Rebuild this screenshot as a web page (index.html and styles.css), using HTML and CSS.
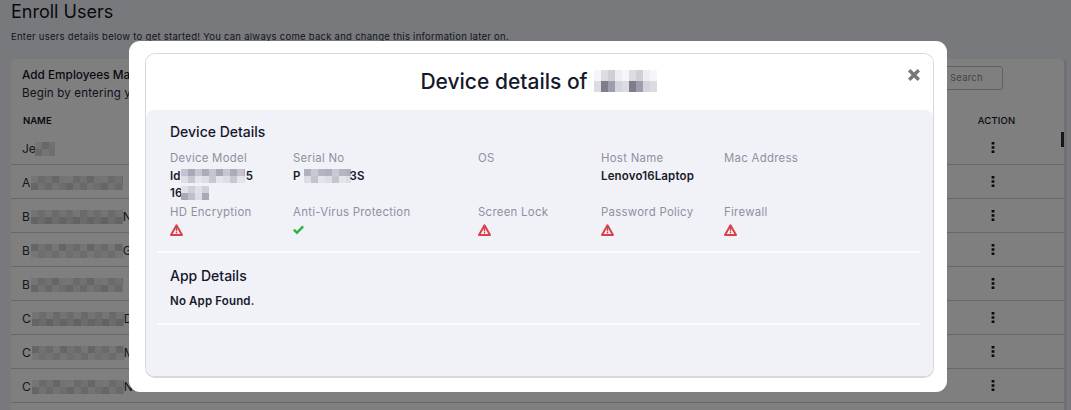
FILE: index.html
```html
<!DOCTYPE html>
<html lang="en">
<head>
<meta charset="utf-8">
<title>Enroll Users</title>
<link rel="stylesheet" href="styles.css">
</head>
<body>
<svg class="defs" width="0" height="0" aria-hidden="true">
  <symbol id="warn" viewBox="0 0 13 12">
    <path d="M6.5 1.3 12 10.9H1z" fill="#fbf3f4" stroke="#d9404c" stroke-width="2" stroke-linejoin="round"/>
    <path d="M5.7 3.9h1.6l-.2 3.6H5.9zM5.8 8.1h1.4v1.4H5.8z" fill="#d9404c"/>
  </symbol>
  <symbol id="dots" viewBox="0 0 4 11">
    <path d="M.6 0h2.8v2.6H.6zM.6 4.2h2.8v2.6H.6zM.6 8.4h2.8V11H.6z" fill="#12131a"/>
  </symbol>
</svg>
<main class="page">
  <h1 class="page-title">Enroll Users</h1>
  <p class="page-sub">Enter users details below to get started! You can always come back and change this information later on.</p>
  <section class="card">
    <div class="card-head">
      <div>
        <h2 class="card-title">Add Employees Manually</h2>
        <p class="card-sub">Begin by entering your employees details</p>
      </div>
      <div class="search">Search</div>
    </div>
    <div class="thead"><span>NAME</span><span class="act">ACTION</span></div>
    <div class="scrollthumb"></div>
    <div class="row"><span class="name">Je<i class="mosaic m-short"></i></span><span class="act"><svg class="dots"><use href="#dots"/></svg></span></div>
    <div class="row"><span class="name">A<i class="mosaic m-a"></i></span><span class="act"><svg class="dots"><use href="#dots"/></svg></span></div>
    <div class="row"><span class="name">B<i class="mosaic m-b"></i>N</span><span class="act"><svg class="dots"><use href="#dots"/></svg></span></div>
    <div class="row"><span class="name">B<i class="mosaic m-c"></i>G</span><span class="act"><svg class="dots"><use href="#dots"/></svg></span></div>
    <div class="row"><span class="name">B<i class="mosaic m-a"></i></span><span class="act"><svg class="dots"><use href="#dots"/></svg></span></div>
    <div class="row"><span class="name">C<i class="mosaic m-b"></i>D</span><span class="act"><svg class="dots"><use href="#dots"/></svg></span></div>
    <div class="row"><span class="name">C<i class="mosaic m-c"></i>M</span><span class="act"><svg class="dots"><use href="#dots"/></svg></span></div>
    <div class="row"><span class="name">C<i class="mosaic m-a"></i>NE</span><span class="extra">gg</span><span class="extra2">g,</span><span class="act"><svg class="dots"><use href="#dots"/></svg></span></div>
  </section>
</main>

<div class="overlay">
  <div class="modal">
    <div class="panel">
      <header class="modal-head">
        <h2 class="modal-title">Device details of <i class="mosaic m-title"></i></h2>
        <svg class="close" viewBox="0 0 12 12" aria-label="Close"><path d="M2.4 0 6 3.6 9.6 0 12 2.4 8.4 6 12 9.6 9.6 12 6 8.4 2.4 12 0 9.6 3.6 6 0 2.4z" fill="#777"/></svg>
      </header>
      <div class="modal-body">
        <section class="section sec-device">
          <h3 class="section-title">Device Details</h3>
          <div class="grid">
            <div class="cell"><div class="label">Device Model</div><div class="value">Id<i class="mosaic m-v1"></i> 5<br>16<i class="mosaic m-v2"></i></div></div>
            <div class="cell"><div class="label">Serial No</div><div class="value">P<i class="mosaic m-v3"></i>3S</div></div>
            <div class="cell"><div class="label">OS</div></div>
            <div class="cell"><div class="label">Host Name</div><div class="value">Lenovo16Laptop</div></div>
            <div class="cell"><div class="label">Mac Address</div></div>

            <div class="cell"><div class="label">HD Encryption</div><svg class="icon"><use href="#warn"/></svg></div>
            <div class="cell"><div class="label">Anti-Virus Protection</div><svg class="icon check" viewBox="0 0 12 10"><path d="M4.3 9.8 0 5.5l1.9-1.9 2.4 2.4L10.1 0 12 1.9z" fill="#2fb344"/></svg></div>
            <div class="cell"><div class="label">Screen Lock</div><svg class="icon"><use href="#warn"/></svg></div>
            <div class="cell"><div class="label">Password Policy</div><svg class="icon"><use href="#warn"/></svg></div>
            <div class="cell"><div class="label">Firewall</div><svg class="icon"><use href="#warn"/></svg></div>
          </div>
        </section>
        <section class="section sec-app">
          <h3 class="section-title">App Details</h3>
          <div class="value">No App Found.</div>
        </section>
      </div>
    </div>
  </div>
</div>
</body>
</html>
```
FILE: styles.css
```css
* { box-sizing: border-box; }
html, body { margin: 0; height: 100%; overflow: hidden; }
body { background: #f0f2f8; font-family: Inter, "Liberation Sans", sans-serif; color: #12131f; }
.defs { position: absolute; }

.page { height: 410px; overflow: hidden; padding: 1px 4px 0 11px; }
.page-title { margin: 0; font-size: 18px; line-height: 22px; font-weight: 400; }
.page-sub { margin: 7px 0 0; font-size: 9.5px; line-height: 13px; letter-spacing: .27px; color: #2a2f45; }
.card { position: relative; margin-top: 16px; padding: 8px 0 7px; background: #fff; border-radius: 5px 5px 0 0; border-right: 3px solid #e0e0e6; }
.card-head { display: flex; justify-content: space-between; padding-left: 11px; }
.card-title { margin: 0; font-size: 11.8px; line-height: 16px; font-weight: 500; }
.card-sub { margin: 2px 0 0; font-size: 11.6px; line-height: 16px; letter-spacing: .15px; color: #22263a; }
.search { width: 90px; height: 24px; margin: -1px 61px 0 0; border: 1px solid #c0c0c4; border-radius: 3px; padding-left: 36px; font-size: 9.5px; line-height: 22px; letter-spacing: .2px; color: #8a8a90; }

.thead { display: flex; justify-content: space-between; align-items: center; height: 21px; margin-top: 9px; padding-left: 12px; font-size: 9.5px; font-weight: 600; }
.thead .act { width: 96px; padding-right: 39px; text-align: center; font-weight: 500; letter-spacing: .15px; white-space: nowrap; }
.scrollthumb { position: absolute; right: 0; top: 73px; width: 3px; height: 15px; background: #2c2a48; }
.row { position: relative; display: flex; justify-content: space-between; align-items: center; height: 34px; padding-left: 11px; border-bottom: 1px solid #cfcfcf; font-size: 12px; color: #2b2e3c; }
.name { display: flex; align-items: center; padding-top: 2px; }
.row .act { width: 96px; padding-right: 46px; display: flex; justify-content: center; }
.dots { width: 4px; height: 11px; }
.extra, .extra2 { position: absolute; top: 8px; font-size: 12px; }
.extra { left: 206px; }
.extra2 { left: 247px; }

.mosaic { display: inline-block; background-size: 100% 50%; background-repeat: no-repeat; background-position: 0 0, 0 100%; }
.m-short { width: 20px; height: 14px; margin-left: -1px;
  background-image:
    repeating-linear-gradient(90deg, #eaeaea 0 7px, #d0d0d0 7px 14px, #e2e2e2 14px 21px),
    repeating-linear-gradient(90deg, #d2d2d2 0 7px, #e8e8e8 7px 14px, #dcdcdc 14px 21px); }
.m-a, .m-b, .m-c { width: 92px; height: 14px; margin-left: 1px;
  background-image:
    repeating-linear-gradient(90deg, #eaeaea 0 7px, #d4d4d4 7px 14px, #e2e2e2 14px 21px, #cccccc 21px 28px, #e6e6e6 28px 35px),
    repeating-linear-gradient(90deg, #ccccd2 0 7px, #e4e4e4 7px 14px, #d2d2d2 14px 21px, #e6e6e6 21px 28px, #dadada 28px 35px); }
.m-b { background-image:
    repeating-linear-gradient(90deg, #e6e6e6 0 7px, #d8d8d8 7px 14px, #eaeaea 14px 21px, #d4d4d4 21px 28px),
    repeating-linear-gradient(90deg, #c8c8ce 0 7px, #d6d6d6 7px 14px, #c4c4ca 14px 21px, #d8d8d8 21px 28px); }
.m-c { background-image:
    repeating-linear-gradient(90deg, #ccccd2 0 7px, #e2e2e2 7px 14px, #d4d4da 14px 21px, #eaeaea 21px 28px),
    repeating-linear-gradient(90deg, #eaeaea 0 7px, #dcdcdc 7px 14px, #e6e6e6 14px 21px, #d8d8d8 21px 28px); }

.overlay { position: absolute; inset: 0; background: rgba(0, 0, 0, .5); }
.modal { width: 818px; height: 351px; margin: 41px 0 0 129px; padding: 12px 13px 14px 16px; background: #fff; border-radius: 11px; }
.panel { height: 100%; display: flex; flex-direction: column; border: 1px solid #d8d8d8; border-bottom-width: 2px; border-radius: 10px; overflow: hidden; }
.modal-head { position: relative; flex: none; height: 56px; display: flex; align-items: center; justify-content: center; padding: 0 2px 2px 0; background: #fff; }
.modal-title { margin: 0; display: flex; align-items: center; font-size: 21px; font-weight: 500; color: #15182b; }
.modal-title .mosaic { margin-left: 6px; }
.m-title { width: 63px; height: 22px;
  background-image:
    repeating-linear-gradient(90deg, #f6f6f8 0 7px, #dcdce2 7px 14px, #cfcfd6 14px 21px, #eeeef2 21px 28px),
    repeating-linear-gradient(90deg, #dcdce2 0 7px, #7f7d8c 7px 14px, #9c9eb0 14px 21px, #d4d4dc 21px 28px); }
.close { position: absolute; top: 15px; right: 13px; width: 12px; height: 12px; }

.modal-body { flex: 1; background: #f0f2f8; padding: 12px 13px 0 11px; border-radius: 8px 8px 0 0; }
.section { border-bottom: 2px solid #fafbfd; padding-left: 13px; }
.section-title { margin: 0; font-size: 14px; line-height: 20px; font-weight: 500; color: #15182b; }
.sec-device { height: 131px; }
.sec-app { height: 72px; padding-top: 13px; }
.sec-app .section-title { margin-bottom: 7px; }
.grid { display: grid; grid-template-columns: 123px 185px 123px 123px 1fr; margin-top: 8px; }
.cell:nth-child(-n+5) { padding-bottom: 2px; }
.label { font-size: 11.4px; line-height: 16px; letter-spacing: .28px; color: #8e909f; }
.cell:nth-child(-n+5) .label { margin-bottom: 2px; }
.value { font-size: 11.5px; line-height: 17px; font-weight: 600; letter-spacing: .15px; color: #181a2a; }
.value .mosaic { vertical-align: -3px; height: 14px; }
.m-v1 { width: 64px; margin-right: -2px;
  background-image:
    repeating-linear-gradient(90deg, #c4c4d0 0 7px, #a8a8b6 7px 14px, #c6c6d0 14px 21px, #acacb8 21px 28px),
    repeating-linear-gradient(90deg, #dcdee6 0 7px, #c6c8d2 7px 14px, #e4e5ec 14px 21px); }
.m-v2 { width: 28px; margin-left: -2px;
  background-image:
    repeating-linear-gradient(90deg, #dfe1e8 0 7px, #cfd1da 7px 14px),
    repeating-linear-gradient(90deg, #a8a8b6 0 7px, #bec0ca 7px 14px, #dcdee6 14px 21px); }
.m-v3 { width: 47px; margin: 0 -1px 0 3px;
  background-image:
    repeating-linear-gradient(90deg, #b0b0be 0 7px, #c8c9d4 7px 14px, #b4b4c2 14px 21px),
    repeating-linear-gradient(90deg, #dcdee6 0 7px, #c2c4ce 7px 14px, #e4e5ec 14px 21px); }
.icon { display: block; width: 13px; height: 12px; margin-top: 4px; }
.check { width: 11px; height: 10px; margin-top: 5px; }
```
